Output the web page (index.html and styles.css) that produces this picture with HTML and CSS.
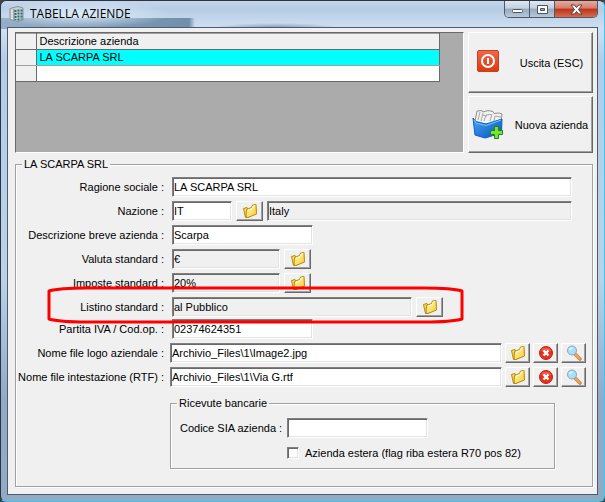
FILE: index.html
```html
<!DOCTYPE html>
<html lang="it">
<head>
    <meta charset="UTF-8">
    <meta name="viewport" content="width=device-width, initial-scale=1.0">
    <title>TABELLA AZIENDE</title>
    <link rel="stylesheet" href="styles.css">
</head>
<body>
<svg class="defs" width="0" height="0" aria-hidden="true">
    <defs>
        <linearGradient id="gold" x1="0" y1="0" x2="1" y2="1">
            <stop offset="0" stop-color="#fffbc0"/>
            <stop offset="1" stop-color="#f6cb2c"/>
        </linearGradient>
        <linearGradient id="blue" x1="0" y1="0" x2="1" y2="1">
            <stop offset="0" stop-color="#49a8f8"/>
            <stop offset="1" stop-color="#0352b8"/>
        </linearGradient>
        <linearGradient id="red" x1="0" y1="0" x2="0" y2="1">
            <stop offset="0" stop-color="#f0684c"/>
            <stop offset="1" stop-color="#d93a10"/>
        </linearGradient>
        <symbol id="folder" viewBox="0 0 16 16">
            <path d="M1.500 5.500L5 4.500 6 6l1 8-3.500.500z" fill="#f8dc60" stroke="#b8860b"/>
            <path d="M4.500 6.500l5-2 1-2.500 3.500-.500.500 9.500-8.500 3.500-2-.500z" fill="url(#gold)" stroke="#b8860b"/>
            <path d="M5.700 7.200l4.500-1.700 1-2.500 2-.3" stroke="#fffde0" fill="none"/>
        </symbol>
        <symbol id="cancel" viewBox="0 0 16 16">
            <circle cx="8" cy="8" r="6.500" fill="#e8301c" stroke="#c82010"/>
            <path d="M3 6a5.500 5.500 0 0 1 10 0z" fill="#f4806c" opacity=".6"/>
            <path d="M5.500 5.500l5 5M10.500 5.500l-5 5" stroke="#fff" stroke-width="2.400"/>
        </symbol>
        <symbol id="lens" viewBox="0 0 16 16">
            <path d="M9.500 9.500l4.500 4.500" stroke="#b8703c" stroke-width="3.200" stroke-linecap="round"/>
            <path d="M9.800 9.800l4 4" stroke="#ffa650" stroke-width="2" stroke-linecap="round"/>
            <circle cx="6" cy="5.500" r="4.500" fill="#a8e0fa" stroke="#8aa2b8"/>
            <path d="M3.500 5a3 3 0 0 1 3-2" stroke="#e8faff" stroke-width="1.500" fill="none"/>
        </symbol>
    </defs>
</svg>

<div class="window">
    <header class="titlebar">
        <svg class="app-icon" viewBox="0 0 16 16" aria-hidden="true">
            <path d="M1 2.500L9 .500l5 1.500v12l-5 1.500-8-2z" fill="#c9cfd0" stroke="#8a9294"/>
            <path d="M5 3v11.500" stroke="#7d8688"/>
            <path d="M2 5h2M2 7.500h2M2 10h2M2 12.500h2" stroke="#f4f4f4"/>
            <path d="M6.500 4v10M9.500 3.500v11M12.500 3.500v10" stroke="#2c6f78" stroke-width="2" stroke-dasharray="2 1"/>
        </svg>
        <h1>TABELLA AZIENDE</h1>
        <div class="window-buttons">
            <button type="button" aria-label="Riduci a icona">
                <svg width="13" height="11" viewBox="0 0 13 11"><rect x="1.500" y="5.500" width="10" height="3" rx="1" fill="#fff" stroke="#4a5464"/></svg>
            </button>
            <button type="button" aria-label="Ingrandisci">
                <svg width="13" height="11" viewBox="0 0 13 11"><path d="M1.500 1.500h10v8h-10zM4.500 4.500v2h4v-2z" fill="#fff" fill-rule="evenodd" stroke="#4a5464"/></svg>
            </button>
            <button type="button" class="close" aria-label="Chiudi">
                <svg width="13" height="11" viewBox="0 0 13 11"><path d="M1 1h3.500l2 2.500 2-2.500H12L8.500 5.500 12 10H8.500l-2-2.500-2 2.500H1l3.500-4.500z" fill="#fff" stroke="#553c44"/></svg>
            </button>
        </div>
    </header>

    <main class="client">
        <div class="top">
            <div class="grid-box">
                <table>
                    <thead>
                        <tr><th class="marker"></th><th>Descrizione azienda</th></tr>
                    </thead>
                    <tbody>
                        <tr class="selected"><td class="marker"></td><td>LA SCARPA SRL</td></tr>
                        <tr><td class="marker"></td><td></td></tr>
                    </tbody>
                </table>
            </div>
            <div class="actions">
                <button type="button" class="action exit">
                    <svg width="32" height="32" viewBox="0 0 32 32" aria-hidden="true">
                        <rect x="5.500" y="3.500" width="21" height="21" rx="1.500" fill="url(#red)" stroke="#c8401c"/>
                        <circle cx="16" cy="14" r="6" fill="none" stroke="#fff" stroke-width="2"/>
                        <path d="M16 11v6" stroke="#fff" stroke-width="2"/>
                    </svg>
                    <span>Uscita (ESC)</span>
                </button>
                <button type="button" class="action add">
                    <svg width="32" height="32" viewBox="0 0 32 32" aria-hidden="true">
                        <path d="M3 12L5 2l5-.500 1 1.500 5-1.500 5 1 1 2 5-.500 3 1-1 8-12 3z" fill="#f2f2f2" stroke="#8e8e8e"/>
                        <path d="M6 11l2-8M9 12l2-8M12 12l2-6 5-.500M18 12l2-7M22 12l1-5 6 1M11 6l4 1" fill="none" stroke="#a5a5a5"/>
                        <path d="M1 9l3 4 10 2 16-5-.500 14L13 29 3 26z" fill="url(#blue)" stroke="#0b61c4"/>
                        <path d="M2 11l2 3 10 2.500L29 11" fill="none" stroke="#7cc4ff"/>
                        <path d="M22.500 17.500h4v4h4v4h-4v4h-4v-4h-4v-4h4z" fill="#7be03a" stroke="#168a12"/>
                    </svg>
                    <span>Nuova azienda</span>
                </button>
            </div>
        </div>

        <fieldset class="group company">
            <legend>LA SCARPA SRL</legend>

            <div class="rows">
                <div class="row">
                    <label for="ragione">Ragione sociale :</label>
                    <input id="ragione" class="fill" type="text" value="LA SCARPA SRL">
                </div>
                <div class="row">
                    <label for="nazione">Nazione :</label>
                    <input id="nazione" class="w-code" type="text" value="IT">
                    <button type="button" class="tool" aria-label="Scegli nazione"><svg><use href="#folder"/></svg></button>
                    <input class="fill" type="text" value="Italy" aria-label="Nome nazione" readonly>
                </div>
                <div class="row">
                    <label for="breve">Descrizione breve azienda :</label>
                    <input id="breve" class="w-mid" type="text" value="Scarpa">
                </div>
                <div class="row">
                    <label for="valuta">Valuta standard :</label>
                    <input id="valuta" class="w-short" type="text" value="€" readonly>
                    <button type="button" class="tool" aria-label="Scegli valuta"><svg><use href="#folder"/></svg></button>
                </div>
                <div class="row">
                    <label for="imposte">Imposte standard :</label>
                    <input id="imposte" class="w-short" type="text" value="20%" readonly>
                    <button type="button" class="tool" aria-label="Scegli imposte"><svg><use href="#folder"/></svg></button>
                </div>
                <div class="row marked">
                    <label for="listino">Listino standard :</label>
                    <input id="listino" class="w-long" type="text" value="al Pubblico" readonly>
                    <button type="button" class="tool" aria-label="Scegli listino"><svg><use href="#folder"/></svg></button>
                    <svg class="highlight" viewBox="0 0 417 38" aria-hidden="true">
                        <path d="M2 33V5Q12 2 40 2H377Q405 2 415 5V33Q405 36 377 36H40Q12 36 2 33z" fill="none" stroke="#f00" stroke-width="3" stroke-linejoin="round"/>
                    </svg>
                </div>
            </div>

            <div class="rows files">
                <div class="row">
                    <label for="piva">Partita IVA / Cod.op. :</label>
                    <input id="piva" class="w-mid" type="text" value="02374624351" autofocus>
                </div>
                <div class="row file">
                    <label for="logo">Nome file logo aziendale :</label>
                    <input id="logo" class="fill" type="text" value="Archivio_Files\1\Image2.jpg">
                    <button type="button" class="tool" aria-label="Apri logo"><svg><use href="#folder"/></svg></button>
                    <button type="button" class="tool" aria-label="Elimina logo"><svg><use href="#cancel"/></svg></button>
                    <button type="button" class="tool" aria-label="Visualizza logo"><svg><use href="#lens"/></svg></button>
                </div>
                <div class="row file">
                    <label for="rtf">Nome file intestazione (RTF) :</label>
                    <input id="rtf" class="fill" type="text" value="Archivio_Files\1\Via G.rtf">
                    <button type="button" class="tool" aria-label="Apri intestazione"><svg><use href="#folder"/></svg></button>
                    <button type="button" class="tool" aria-label="Elimina intestazione"><svg><use href="#cancel"/></svg></button>
                    <button type="button" class="tool" aria-label="Visualizza intestazione"><svg><use href="#lens"/></svg></button>
                </div>
            </div>

            <fieldset class="group bank">
                <legend>Ricevute bancarie</legend>
                <div class="bank-row">
                    <label for="sia">Codice SIA azienda :</label>
                    <input id="sia" class="w-mid" type="text">
                </div>
                <div class="bank-row check">
                    <input id="estera" type="checkbox">
                    <label for="estera">Azienda estera (flag riba estera R70 pos 82)</label>
                </div>
            </fieldset>
        </fieldset>
    </main>
</div>
</body>
</html>
```

FILE: styles.css
```css
* {
    box-sizing: border-box;
}
body {
    margin: 0;
    background: #3c4650;
    color: #000;
    font-family: "Liberation Sans", Arial, sans-serif;
    font-size: 11px;
    line-height: 14px;
}
input, button {
    font: inherit;
    color: inherit;
    margin: 0;
}
.defs {
    position: absolute;
}

/* window frame */
.window {
    display: flex;
    flex-direction: column;
    min-height: 100vh;
    padding: 0 6px 6px;
    border: 1px solid #2b3440;
    border-right-color: #35c8f0;
    border-bottom-color: #35c8f0;
    border-radius: 6px;
    background:
        radial-gradient(ellipse 90px 14px at 80px 13px, rgba(225, 238, 250, .95), transparent),
        linear-gradient(90deg, #93aec8 0, #6f8fab 188px, transparent 194px) 0 17px / 100% 11px no-repeat,
        radial-gradient(ellipse 65px 5px at 275px 27px, rgba(70, 95, 125, .6), transparent),
        linear-gradient(180deg, #c4d6ea 0, #b6cce4 8px, #d0e0f2 28px, #b4cce8 60px, #bcd2ea 55%, #8fabc9 80%, #93aac4);
}
.titlebar {
    display: flex;
    align-items: flex-start;
    height: 26px;
}
.app-icon {
    width: 16px;
    height: 16px;
    margin: 5px 5px 0 2px;
}
.titlebar h1 {
    margin: 5px 0 0;
    font-family: "Open Sans", "Noto Sans", sans-serif;
    font-size: 12px;
    font-weight: normal;
    line-height: 16px;
}
.window-buttons {
    display: flex;
    margin-left: auto;
    border: 1px solid #4c5a6c;
    border-top: 0;
    border-radius: 0 0 5px 5px;
    overflow: hidden;
}
.window-buttons button {
    display: flex;
    align-items: center;
    justify-content: center;
    width: 25px;
    height: 16px;
    padding: 0;
    border: 0;
    border-right: 1px solid #4c5a6c;
    background: linear-gradient(#dfe8f2 0, #c3d0df 45%, #98a9bd 50%, #b8c8da);
}
.window-buttons .close {
    width: 42px;
    border-right: 0;
    background: linear-gradient(#e8aa9c 0, #d67c68 45%, #b83420 50%, #d86c48);
}

.client {
    flex: 1;
    display: flex;
    flex-direction: column;
    padding: 4px 4px 7px 7px;
    border: 1px solid #4e5c6a;
    background: #f0f0f0;
}

/* companies list and main actions */
.top {
    display: flex;
    gap: 4px;
}
.grid-box {
    flex: 1;
    padding-right: 23px;
    border: 1px solid;
    border-color: #696969 #fff #fff #696969;
    background: #ababab;
}
table {
    width: 100%;
    border-collapse: collapse;
    table-layout: fixed;
}
th, td {
    height: 16px;
    padding: 0 3px;
    border: 1px solid #a0a0a0;
    border-left: 0;
    border-right-color: #696969;
    background: #fff;
    font-weight: normal;
    line-height: 15px;
    text-align: left;
}
th {
    background: #f0f0f0;
    border-bottom-color: #696969;
}
.marker {
    width: 20px;
    background: #f0f0f0;
}
.selected td:last-child {
    background: #0ff;
}
tbody tr:last-child td {
    border-bottom-color: #696969;
}
.actions {
    display: flex;
    flex-direction: column;
    gap: 3px;
    width: 125px;
}
.action, .tool {
    border: 1px solid;
    border-color: #fff #696969 #696969 #fff;
    background: #f0f0f0;
    box-shadow: inset -1px -1px #a0a0a0;
}
.action {
    display: flex;
    align-items: center;
    height: 57px;
    padding: 0 3px;
}
.action.exit {
    height: 61px;
}
.action span {
    flex: 1;
    text-align: center;
    padding-left: 10px;
    white-space: nowrap;
}

/* groups */
.group {
    min-width: 0;
    margin: 0;
    padding: 0;
    border: 1px solid #a0a0a0;
    box-shadow: 1px 1px #fff, inset 1px 1px #fff;
}
.group legend {
    margin-left: 6px;
    padding: 0 2px;
    background: #f0f0f0;
}
.company {
    flex: 1;
    margin-top: 4px;
}
.rows {
    display: flex;
    flex-direction: column;
    gap: 4px;
    padding: 6px 6px 0 0;
}
.rows.files {
    padding-top: 2px;
}
.row {
    display: flex;
    align-items: center;
    gap: 4px;
    height: 20px;
    padding-right: 14px;
}
.row > label {
    width: 148px;
    margin-right: 4px;
    text-align: right;
    white-space: nowrap;
}
.row.file {
    gap: 3px;
    padding-right: 0;
}
.row.file > label {
    margin-right: 3px;
}
input[type="text"] {
    height: 20px;
    padding: 0 1px;
    border: 1px solid;
    border-color: #808080 #fff #fff #808080;
    border-radius: 0;
    background: #fff;
    box-shadow: inset 1px 1px #696969, inset -1px -1px #e3e3e3;
    outline: 0;
}
input[type="text"]:read-only {
    background: #f0f0f0;
}
.fill {
    flex: 1;
    min-width: 0;
}
.w-code { width: 60px; }
.w-short { width: 108px; }
.w-mid { width: 141px; }
.w-long { width: 240px; }

.tool {
    display: flex;
    align-items: center;
    justify-content: center;
    width: 27px;
    height: 20px;
    padding: 0;
}
.row.file .tool {
    width: 25px;
}
.tool svg {
    width: 16px;
    height: 16px;
}

/* red outline around the price list row */
.marked {
    position: relative;
}
.highlight {
    position: absolute;
    top: -11px;
    left: 31px;
    width: 417px;
    height: 38px;
    pointer-events: none;
}

/* bank receipts */
.bank {
    margin: 9px 37px 0 154px;
    padding-bottom: 8px;
}
.bank-row {
    display: flex;
    align-items: center;
    padding: 8px 0 0 9px;
}
.bank-row > label {
    width: 107px;
}
.bank-row.check {
    gap: 6px;
    padding-left: 116px;
}
.bank-row.check label {
    width: auto;
}
input[type="checkbox"] {
    appearance: none;
    width: 12px;
    height: 12px;
    border: 1px solid;
    border-color: #808080 #fff #fff #808080;
    background: #fff;
    box-shadow: inset 1px 1px #696969, inset -1px -1px #e3e3e3;
}
```
